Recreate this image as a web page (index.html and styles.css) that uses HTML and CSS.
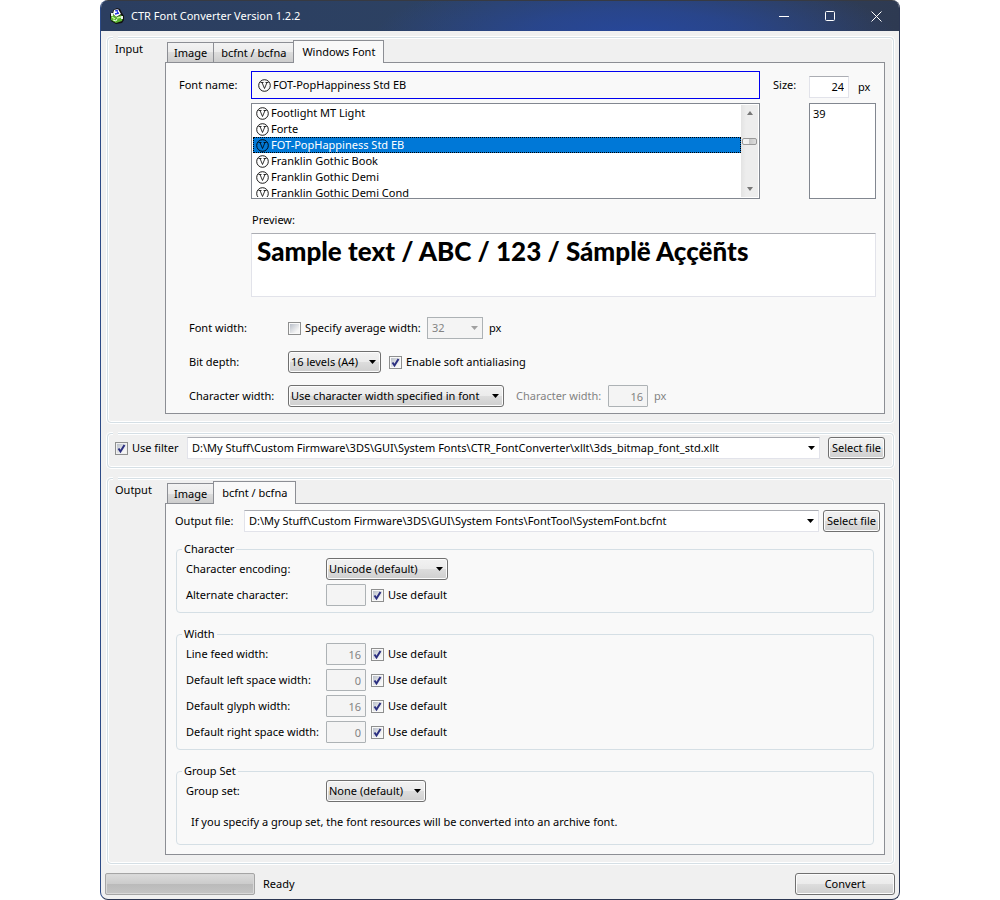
FILE: index.html
```html
<!DOCTYPE html>
<html lang="en">
<head>
<meta charset="utf-8">
<title>CTR Font Converter</title>
<link rel="stylesheet" href="styles.css">
</head>
<body>
<svg class="defs" aria-hidden="true">
  <symbol id="otf" viewBox="0 0 13 13">
    <circle cx="6.5" cy="6.5" r="5.8" fill="none" stroke="currentColor" stroke-width=".9"/>
    <path d="M2.500 3.500h3M7.500 3.500h3M4 3.500l2.500 6L9 3.500" fill="none" stroke="currentColor" stroke-width=".8"/>
  </symbol>
</svg>
<div class="window">
  <header class="titlebar">
    <svg class="app-icon" viewBox="0 0 16 16" aria-hidden="true">
      <path d="M1 6l3-2V2l4-2 3 1 2 4 2 3v4l-2 3-6 1-5-3-1-4z" fill="#111"/>
      <path d="M5 2l4-1 3 5-5 3-3-3z" fill="#fff"/>
      <path d="M6 3l3-1M8 3l1 3M6 6l4-1" stroke="#2233e0" stroke-width="1.300"/>
      <path d="M2 7l2-1 3 3 5-2 2 2-1 4-6 2-5-3z" fill="#58b030"/>
      <path d="M3 9l3 2M8 10l4-1" stroke="#c8f898" stroke-width="1.300"/>
      <path d="M4 12l3 1 1-2" stroke="#e8ffe0" fill="none"/>
      <path d="M2 5h2v3H2zM12 8h2v3h-2z" fill="#e8f4e8"/>
    </svg>
    <h1 class="title">CTR Font Converter Version 1.2.2</h1>
    <div class="caption-buttons">
      <button class="caption" aria-label="Minimize"><svg viewBox="0 0 11 11"><path d="M0 5.500h10" /></svg></button>
      <button class="caption" aria-label="Maximize"><svg viewBox="0 0 11 11"><rect x=".5" y=".5" width="9" height="9" rx="1"/></svg></button>
      <button class="caption" aria-label="Close"><svg viewBox="0 0 11 11"><path d="M.5.500l10 10M10.500.500l-10 10"/></svg></button>
    </div>
  </header>

  <main class="client">
    <section class="group split">
      <h2 class="group-name">Input</h2>
      <div class="tabs">
        <div class="tablist" role="tablist">
          <button class="tab" role="tab">Image</button>
          <button class="tab" role="tab">bcfnt / bcfna</button>
          <button class="tab selected" role="tab" aria-selected="true">Windows Font</button>
        </div>
        <div class="panel input-panel" role="tabpanel">
          <div class="font-grid">
            <span class="label">Font name:</span>
            <div class="font-current"><svg class="otf"><use href="#otf"/></svg>FOT-PopHappiness Std EB</div>
            <label class="label size-label" for="size">Size:</label>
            <div class="size-cell"><input id="size" class="text num" type="text" value="24"><span>px</span></div>
            <div class="font-list">
              <ul class="items" role="listbox" aria-label="Font name">
                <li role="option"><svg class="otf"><use href="#otf"/></svg>Footlight MT Light</li>
                <li role="option"><svg class="otf"><use href="#otf"/></svg>Forte</li>
                <li role="option" class="picked" aria-selected="true"><svg class="otf"><use href="#otf"/></svg><span>FOT-PopHappiness Std EB</span></li>
                <li role="option"><svg class="otf"><use href="#otf"/></svg>Franklin Gothic Book</li>
                <li role="option"><svg class="otf"><use href="#otf"/></svg>Franklin Gothic Demi</li>
                <li role="option"><svg class="otf"><use href="#otf"/></svg>Franklin Gothic Demi Cond</li>
              </ul>
              <div class="scrollbar"><i class="up"></i><i class="thumb"></i><i class="down"></i></div>
            </div>
            <ul class="size-list" role="listbox" aria-label="Size"><li role="option">39</li></ul>
            <span class="preview-label">Preview:</span>
            <div class="preview">Sample text / ABC / 123 / Sámplë Aççëñts</div>
          </div>
          <div class="options">
            <div class="row">
              <span class="name">Font width:</span>
              <label class="check avg"><input type="checkbox">Specify average width:</label>
              <select class="combo flat" aria-label="Average width" disabled><option>32</option></select>
              <span class="unit">px</span>
            </div>
            <div class="row">
              <label class="name" for="depth">Bit depth:</label>
              <select class="combo depth" id="depth"><option>16 levels (A4)</option></select>
              <label class="check after-combo"><input type="checkbox" checked>Enable soft antialiasing</label>
            </div>
            <div class="row">
              <label class="name" for="cwmode">Character width:</label>
              <select class="combo mode" id="cwmode"><option>Use character width specified in font</option></select>
              <label class="dim cw-label" for="cw">Character width:</label>
              <input class="text num" id="cw" type="text" value="16" disabled>
              <span class="unit dim">px</span>
            </div>
          </div>
        </div>
      </div>
    </section>

    <section class="group filter">
      <label class="check filter-check"><input type="checkbox" checked>Use filter</label>
      <select class="combo path" aria-label="Filter file"><option>D:\My Stuff\Custom Firmware\3DS\GUI\System Fonts\CTR_FontConverter\xllt\3ds_bitmap_font_std.xllt</option></select>
      <button class="push file">Select file</button>
    </section>

    <section class="group split">
      <h2 class="group-name">Output</h2>
      <div class="tabs">
        <div class="tablist" role="tablist">
          <button class="tab" role="tab">Image</button>
          <button class="tab selected" role="tab" aria-selected="true">bcfnt / bcfna</button>
        </div>
        <div class="panel output-panel" role="tabpanel">
          <div class="out-file">
            <label class="out-label" for="outfile">Output file:</label>
            <select class="combo path" id="outfile"><option>D:\My Stuff\Custom Firmware\3DS\GUI\System Fonts\FontTool\SystemFont.bcfnt</option></select>
            <button class="push file">Select file</button>
          </div>
          <fieldset class="box">
            <legend>Character</legend>
            <div class="field"><label for="enc">Character encoding:</label><select class="combo enc" id="enc"><option>Unicode (default)</option></select></div>
            <div class="field"><label for="alt">Alternate character:</label><input class="text num" id="alt" type="text" disabled><label class="check"><input type="checkbox" checked>Use default</label></div>
          </fieldset>
          <fieldset class="box">
            <legend>Width</legend>
            <div class="field"><label for="lf">Line feed width:</label><input class="text num" id="lf" type="text" value="16" disabled><label class="check"><input type="checkbox" checked>Use default</label></div>
            <div class="field"><label for="ls">Default left space width:</label><input class="text num" id="ls" type="text" value="0" disabled><label class="check"><input type="checkbox" checked>Use default</label></div>
            <div class="field"><label for="gw">Default glyph width:</label><input class="text num" id="gw" type="text" value="16" disabled><label class="check"><input type="checkbox" checked>Use default</label></div>
            <div class="field"><label for="rs">Default right space width:</label><input class="text num" id="rs" type="text" value="0" disabled><label class="check"><input type="checkbox" checked>Use default</label></div>
          </fieldset>
          <fieldset class="box">
            <legend>Group Set</legend>
            <div class="field"><label for="gs">Group set:</label><select class="combo set" id="gs"><option>None (default)</option></select></div>
            <p class="note">If you specify a group set, the font resources will be converted into an archive font.</p>
          </fieldset>
        </div>
      </div>
    </section>
  </main>

  <footer class="status">
    <div class="progress" role="progressbar" aria-label="Progress"></div>
    <span>Ready</span>
    <button class="push convert">Convert</button>
  </footer>
</div>
</body>
</html>
```
FILE: styles.css
```css
* { box-sizing: border-box; }
body {
  margin: 0;
  background: #fff;
  color: #000;
  font: 11px/16px "Noto Sans", "Open Sans", sans-serif;
}
button, input, select { font: inherit; color: inherit; margin: 0; }
ul { list-style: none; margin: 0; padding: 0; }
.defs { position: absolute; width: 0; height: 0; }

.window {
  width: 80%;
  min-width: 720px;
  margin: 0 auto;
  border: 1px solid #2b3652;
  border-top: 0;
  border-left-color: #2c4a86;
  border-radius: 8px;
  background: #f0f0f0;
  overflow: hidden;
}

.titlebar {
  display: flex;
  align-items: center;
  height: 31px;
  padding-left: 8px;
  border-top: 1px solid #373a42;
  color: #fff;
  background:
    radial-gradient(ellipse 260px 60px at 67% 110%, #27479a 0%, rgba(39, 71, 154, .75) 40%, rgba(39, 71, 154, 0) 100%),
    linear-gradient(90deg, #2b3e60, #2d4263 50%, #2f3e57 85%, #2e3a52);
}
.app-icon { width: 16px; height: 16px; }
.title { flex: 1; margin: 0 0 0 6px; font-size: 11px; font-weight: 400; }
.caption-buttons { display: flex; }
.caption {
  display: grid;
  place-items: center;
  width: 46px;
  height: 30px;
  padding: 0;
  border: 0;
  background: none;
}
.caption svg { width: 11px; height: 11px; fill: none; stroke: #fff; }

.client { display: flex; flex-direction: column; gap: 10px; padding: 6px 5px 0 6px; }
.group {
  position: relative;
  border: 1px solid #d5dfe5;
  border-radius: 4px;
  box-shadow: 0 0 0 1px #fff, inset 0 0 0 1px #fff;
}
.group::before {
  content: "";
  position: absolute;
  top: -2px;
  left: 5px;
  width: 5px;
  height: 3px;
  background: #f0f0f0;
}
.split { display: grid; grid-template-columns: 50px 1fr; padding: 2px 8px 8px 7px; }
.group-name { margin: 0; padding-top: 1px; font-size: 11px; font-weight: 400; line-height: 16px; }

.tablist { display: flex; align-items: flex-end; height: 22px; padding-left: 2px; }
.tab {
  height: 20px;
  padding: 0 7px;
  border: 1px solid #8c8e94;
  border-bottom: 0;
  background: linear-gradient(#f3f3f3, #ebebeb 50%, #dddddd 50%, #cdcdcd);
}
.tab:first-child { padding: 0 6px; }
.tab + .tab:not(.selected) { border-left: 0; }
.tab.selected {
  position: relative;
  height: 23px;
  margin: 0 0 -1px -1px;
  padding: 0 8px;
  background: #f9f9f9;
}
.panel { border: 1px solid #8c8e94; background: #f9f9f9; }

.input-panel { padding: 8px 8px 0 13px; }
.font-grid {
  display: grid;
  grid-template-columns: 72px 1fr 49px 67px;
  grid-template-rows: 27px 96px auto 64px;
  row-gap: 5px;
}
.label { align-self: center; }
.size-label { padding-left: 13px; }
.font-current {
  display: flex;
  align-items: center;
  margin-bottom: -1px;
  padding-left: 6px;
  border: 1px solid #0000f0;
}
.otf { flex: none; width: 13px; height: 13px; margin-right: 2px; }
.size-cell { display: flex; align-items: center; gap: 9px; padding-top: 4px; }
.font-list, .size-list { border: 1px solid #828790; background: #fff; height: 96px; }
.font-list { grid-column: 2; display: flex; padding: 1px; overflow: hidden; }
.items { flex: 1; height: 92px; overflow: hidden; }
.items li { display: flex; align-items: center; height: 16px; padding-left: 3px; white-space: nowrap; }
.items .picked { background: #0078d7; outline: 1px dotted #000; outline-offset: -1px; }
.picked span { color: #fff; }
.scrollbar {
  display: flex;
  flex-direction: column;
  align-items: center;
  width: 17px;
  padding: 6px 0;
  background: linear-gradient(90deg, #e3e3e3, #ededed 30%, #ededed);
}
.up, .down { border: 3px solid transparent; }
.up { border-top: 0; border-bottom: 4px solid #777; }
.down { margin-top: auto; border-bottom: 0; border-top: 4px solid #777; }
.thumb {
  width: 15px;
  height: 7px;
  margin-top: 23px;
  border: 1px solid #989898;
  border-radius: 2px;
  background: linear-gradient(90deg, #f5f5f5, #eee 50%, #c8c8c8 50%, #ddd);
}
.size-list { grid-column: 4; padding: 2px 3px; }
.preview-label { grid-column: 1 / -1; padding: 8px 0 0 73px; line-height: 16px; }
.preview {
  grid-column: 2 / -1;
  padding: 1px 5px;
  border: 1px solid #e2e3ea;
  border-top-color: #abadb3;
  background: #fff;
  font: 900 26px/32px Lato, "Open Sans", sans-serif;
  white-space: nowrap;
  overflow: hidden;
}

.options { padding: 14px 0 0 10px; }
.row { display: flex; align-items: center; height: 34px; white-space: nowrap; }
.name { flex: none; width: 99px; }
.avg { width: 139px; }
.unit { margin-left: 6px; }
.dim { color: #838383; }
.after-combo { margin-left: 8px; }
.cw-label { width: 92px; margin-left: 12px; }

.check { display: flex; align-items: center; gap: 4px; white-space: nowrap; }
.check input {
  appearance: none;
  flex: none;
  width: 13px;
  height: 13px;
  border: 1px solid #8e8f8f;
  background: linear-gradient(135deg, #b9bfc9, #f6f6f6 80%) content-box #f4f4f4;
  padding: 1px;
}
.check input:checked {
  background:
    url("data:image/svg+xml,%3Csvg xmlns='http://www.w3.org/2000/svg' viewBox='0 0 11 11'%3E%3Cpath d='M2.500 5.500L4.500 8.500L8.500 2' fill='none' stroke='%232b2f80' stroke-width='2'/%3E%3C/svg%3E") center / 11px 11px no-repeat border-box,
    linear-gradient(135deg, #b9bfc9, #f6f6f6 80%) content-box #f4f4f4;
}

.text {
  width: 40px;
  height: 22px;
  padding: 0 4px;
  border: 1px solid #e2e3ea;
  border-top-color: #abadb3;
  background: #fff;
}
.num { text-align: right; }
.text:disabled { border-color: #adb2b5; border-radius: 1px; background: #f4f4f4; color: #838383; }

.combo {
  appearance: none;
  height: 22px;
  padding: 0 16px 0 2px;
  border: 1px solid #707070;
  border-radius: 3px;
  box-shadow: inset 0 0 0 1px #fcfcfc;
  background:
    url("data:image/svg+xml,%3Csvg xmlns='http://www.w3.org/2000/svg' viewBox='0 0 7 4'%3E%3Cpath d='M0 0h7L3.500 4z'/%3E%3C/svg%3E") right 4px center / 7px 4px no-repeat,
    linear-gradient(#f2f2f2, #ebebeb 50%, #dddddd 50%, #cfcfcf);
  white-space: nowrap;
}
.depth { width: 93px; }
.mode { width: 216px; }
.enc { width: 122px; }
.set { width: 100px; }
.flat {
  width: 56px;
  padding-left: 4px;
  border-color: #adb2b5;
  border-radius: 0;
  box-shadow: none;
  background:
    url("data:image/svg+xml,%3Csvg xmlns='http://www.w3.org/2000/svg' viewBox='0 0 7 4'%3E%3Cpath d='M0 0h7L3.500 4z' fill='%23a0a0a0'/%3E%3C/svg%3E") right 4px center / 7px 4px no-repeat,
    #f4f4f4;
  color: #838383;
  opacity: 1;
}
.path {
  flex: 1;
  min-width: 0;
  padding-left: 4px;
  border-color: #abadb3 #e2e3ea #e2e3ea;
  border-radius: 0;
  box-shadow: none;
  background:
    url("data:image/svg+xml,%3Csvg xmlns='http://www.w3.org/2000/svg' viewBox='0 0 7 4'%3E%3Cpath d='M0 0h7L3.500 4z'/%3E%3C/svg%3E") right 4px center / 7px 4px no-repeat,
    #fff;
}

.push {
  height: 22px;
  padding: 0;
  border: 1px solid #707070;
  border-radius: 3px;
  box-shadow: inset 0 0 0 1px #fcfcfc;
  background: linear-gradient(#f2f2f2, #ebebeb 50%, #dddddd 50%, #cfcfcf);
  white-space: nowrap;
}
.file { width: 57px; }

.filter { display: flex; padding: 3px 8px 8px 7px; }
.filter-check { width: 72px; }
.filter .file { margin-left: 8px; }

.output-panel { padding: 6px 4px 9px 9px; }
.out-file { display: flex; align-items: center; margin-bottom: 10px; }
.out-label { width: 69px; }
.out-file .file { margin-left: 4px; }
.box {
  margin: 0 6px 14px 1px;
  padding: 0 9px 4px;
  border: 1px solid #d5dfe5;
  border-radius: 4px;
}
.box:last-child { margin-bottom: 0; }
.box legend { margin-left: -4px; padding: 0 2px; line-height: 14px; }
.field { display: flex; align-items: center; height: 26px; }
.field > label:first-child { width: 140px; white-space: nowrap; }
.field .check { margin-left: 5px; }
.note { margin: 0; padding: 10px 0 10px 5px; }

.status { display: flex; align-items: center; gap: 8px; padding: 9px 4px 4px; }
.progress {
  width: 150px;
  height: 22px;
  border: 1px solid #a5a5a5;
  border-radius: 2px;
  box-shadow: inset 0 0 0 1px #d8d8d8;
  background: linear-gradient(#dcdcdc, #cbcbcb 50%, #bababa 50%, #c4c4c4);
}
.convert { width: 100px; margin-left: auto; }
```
